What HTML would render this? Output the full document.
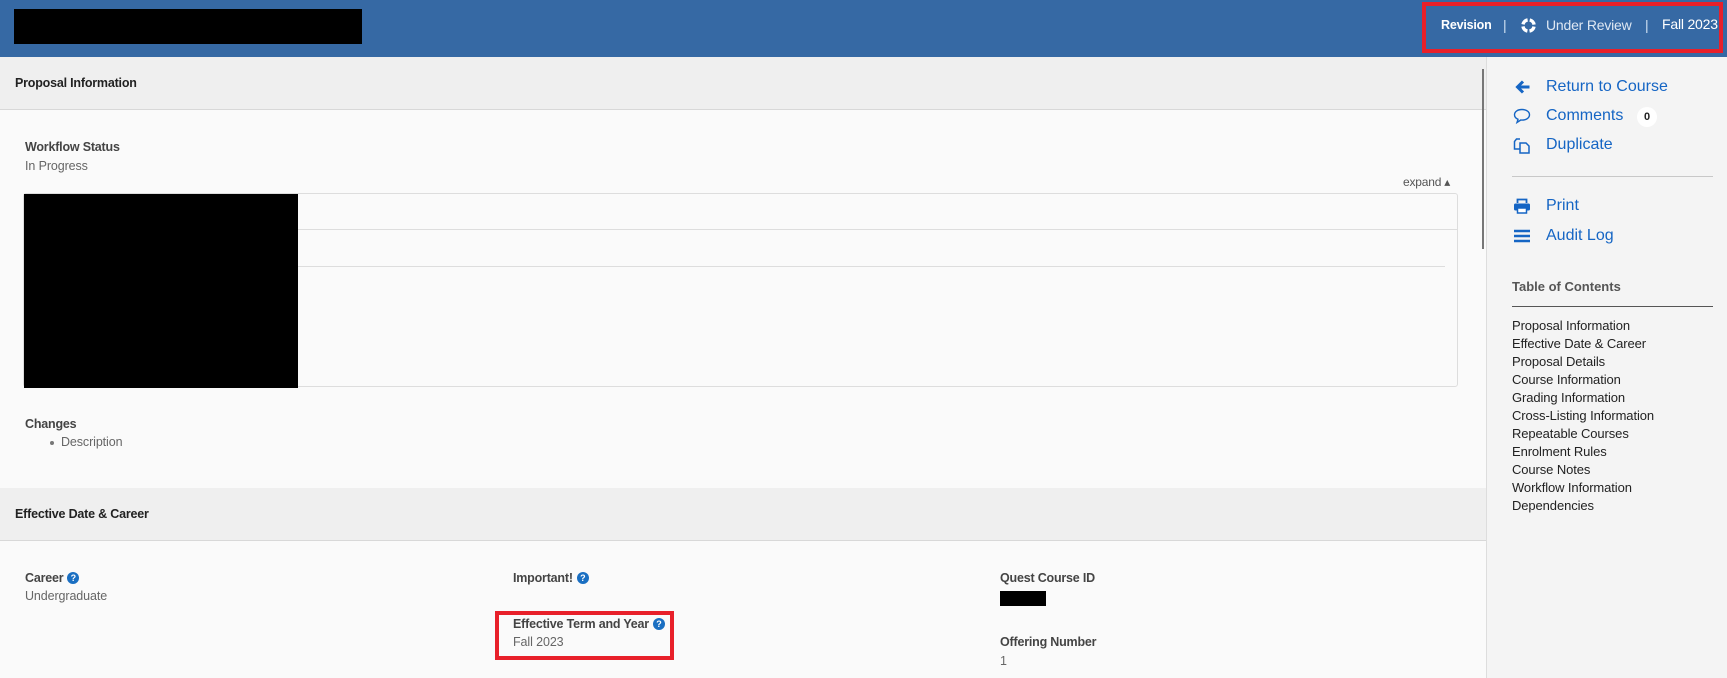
<!DOCTYPE html>
<html><head><meta charset="utf-8"><style>
*{margin:0;padding:0;box-sizing:border-box}
body{width:1727px;height:678px;overflow:hidden;background:#fafafa;font-family:"Liberation Sans",Arial,sans-serif;position:relative}
.a{position:absolute;white-space:nowrap}
.hdr{left:0;top:0;width:1727px;height:57px;background:#3669a4}
.sec{left:0;width:1486px;height:53px;background:#efefef;border-bottom:1px solid #d8d8d8}
.st{font-weight:bold;font-size:12.5px;color:#222;letter-spacing:-0.2px}
.lb{font-weight:bold;font-size:12.5px;color:#444;letter-spacing:-0.2px}
.vl{font-size:12.5px;color:#666;letter-spacing:-0.1px}
.q{display:inline-block;width:12px;height:12px;border-radius:50%;background:#1a6fc2;color:#fff;font-size:9px;font-weight:bold;text-align:center;line-height:12px;vertical-align:1px;margin-left:4px;letter-spacing:0}
.lk{font-size:16px;color:#1565c4}
.toc{font-size:13px;color:#222;line-height:18px;letter-spacing:-0.1px}
</style></head><body>
<div class="a hdr"></div>
<div class="a" style="left:14px;top:9px;width:348px;height:35px;background:#000"></div>
<div class="a" style="left:1422px;top:2px;width:301px;height:51px;border:4px solid #e8202a"></div>
<div class="a" style="left:1441px;top:18px;font-size:12.5px;font-weight:bold;color:#fff;letter-spacing:-0.2px">Revision</div>
<div class="a" style="left:1503px;top:17px;font-size:14px;color:#cfe0f2">|</div>
<svg class="a" style="left:1520px;top:17px" width="17" height="17" viewBox="0 0 16 16"><circle cx="8" cy="8" r="5.3" fill="none" stroke="#fff" stroke-width="3.2" stroke-dasharray="6.3 2.03" stroke-dashoffset="-1"/></svg>
<div class="a" style="left:1546px;top:17px;font-size:14px;color:#dfe8f3;letter-spacing:-0.2px">Under Review</div>
<div class="a" style="left:1645px;top:17px;font-size:14px;color:#cfe0f2">|</div>
<div class="a" style="left:1662px;top:16px;font-size:14px;color:#fff;letter-spacing:-0.2px">Fall 2023</div>

<div class="a sec" style="top:57px"></div>
<div class="a st" style="left:15px;top:76px">Proposal Information</div>
<div class="a" style="left:1482px;top:69px;width:2px;height:180px;background:#777"></div>
<div class="a lb" style="left:25px;top:140px">Workflow Status</div>
<div class="a vl" style="left:25px;top:159px">In Progress</div>
<div class="a" style="left:1403px;top:175px;font-size:12px;color:#555;letter-spacing:-0.2px">expand &#9652;</div>
<div class="a" style="left:23px;top:193px;width:1435px;height:194px;border:1px solid #ddd;border-radius:3px;background:#fafafa"></div>
<div class="a" style="left:298px;top:229px;width:1159px;height:1px;background:#ddd"></div>
<div class="a" style="left:298px;top:266px;width:1147px;height:1px;background:#ddd"></div>
<div class="a" style="left:24px;top:194px;width:274px;height:194px;background:#000"></div>
<div class="a lb" style="left:25px;top:417px">Changes</div>
<div class="a" style="left:50px;top:441px;width:4px;height:4px;border-radius:50%;background:#777"></div>
<div class="a vl" style="left:61px;top:435px">Description</div>

<div class="a sec" style="top:488px"></div>
<div class="a st" style="left:15px;top:507px">Effective Date &amp; Career</div>
<div class="a lb" style="left:25px;top:571px">Career<span class="q">?</span></div>
<div class="a vl" style="left:25px;top:589px">Undergraduate</div>
<div class="a lb" style="left:513px;top:571px">Important!<span class="q">?</span></div>
<div class="a lb" style="left:513px;top:617px">Effective Term and Year<span class="q">?</span></div>
<div class="a vl" style="left:513px;top:635px">Fall 2023</div>
<div class="a" style="left:495px;top:611px;width:179px;height:49px;border:4px solid #e8202a"></div>
<div class="a lb" style="left:1000px;top:571px">Quest Course ID</div>
<div class="a" style="left:1000px;top:591px;width:46px;height:15px;background:#000"></div>
<div class="a lb" style="left:1000px;top:635px">Offering Number</div>
<div class="a vl" style="left:1000px;top:654px">1</div>

<div class="a" style="left:1486px;top:57px;width:241px;height:621px;background:#f4f4f4;border-left:1px solid #ddd"></div>
<svg class="a" style="left:1514px;top:79px" width="17" height="16" viewBox="0 0 16 16"><path d="M15 8H4M8.5 2.5L3 8l5.5 5.5" fill="none" stroke="#1565c4" stroke-width="3"/></svg>
<div class="a lk" style="left:1546px;top:78px">Return to Course</div>
<svg class="a" style="left:1513px;top:108px" width="18" height="17" viewBox="0 0 18 17"><path d="M9 1.5C4.5 1.5 1.5 3.8 1.5 6.8c0 2 1.4 3.6 3.5 4.5L4 14.5l3.8-2.5c.4 0 .8.1 1.2.1 4.5 0 7.5-2.3 7.5-5.3S13.5 1.5 9 1.5z" fill="none" stroke="#1565c4" stroke-width="1.4"/></svg>
<div class="a lk" style="left:1546px;top:107px">Comments</div>
<div class="a" style="left:1637px;top:107px;width:20px;height:20px;border-radius:50%;background:#fff;font-size:11px;font-weight:bold;text-align:center;line-height:20px;color:#222">0</div>
<svg class="a" style="left:1513px;top:137px" width="18" height="18" viewBox="0 0 18 18"><path d="M7 2H3.5L1.5 4.5V12H7" fill="none" stroke="#1565c4" stroke-width="1.5"/><path d="M10 6H7V16h9V9L13 6z" fill="none" stroke="#1565c4" stroke-width="1.5"/></svg>
<div class="a lk" style="left:1546px;top:136px">Duplicate</div>
<div class="a" style="left:1512px;top:176px;width:201px;height:1px;background:#c8c8c8"></div>
<svg class="a" style="left:1513px;top:198px" width="18" height="16" viewBox="0 0 18 16"><path d="M4.5 5V1.5h9V5" fill="none" stroke="#1565c4" stroke-width="1.8"/><rect x="1" y="5.5" width="16" height="7" rx="1.5" fill="#1565c4"/><rect x="4.5" y="10" width="9" height="5" fill="#fff" stroke="#1565c4" stroke-width="1.5"/></svg>
<div class="a lk" style="left:1546px;top:197px">Print</div>
<svg class="a" style="left:1514px;top:229px" width="16" height="14" viewBox="0 0 16 14"><path d="M0 2h16M0 7h16M0 12h16" stroke="#1565c4" stroke-width="2.4"/></svg>
<div class="a lk" style="left:1546px;top:227px">Audit Log</div>
<div class="a" style="left:1512px;top:279px;font-size:13px;font-weight:bold;color:#555">Table of Contents</div>
<div class="a" style="left:1512px;top:306px;width:201px;height:1px;background:#555"></div>
<div class="a toc" style="left:1512px;top:317px">Proposal Information<br>Effective Date &amp; Career<br>Proposal Details<br>Course Information<br>Grading Information<br>Cross-Listing Information<br>Repeatable Courses<br>Enrolment Rules<br>Course Notes<br>Workflow Information<br>Dependencies</div>
</body></html>
